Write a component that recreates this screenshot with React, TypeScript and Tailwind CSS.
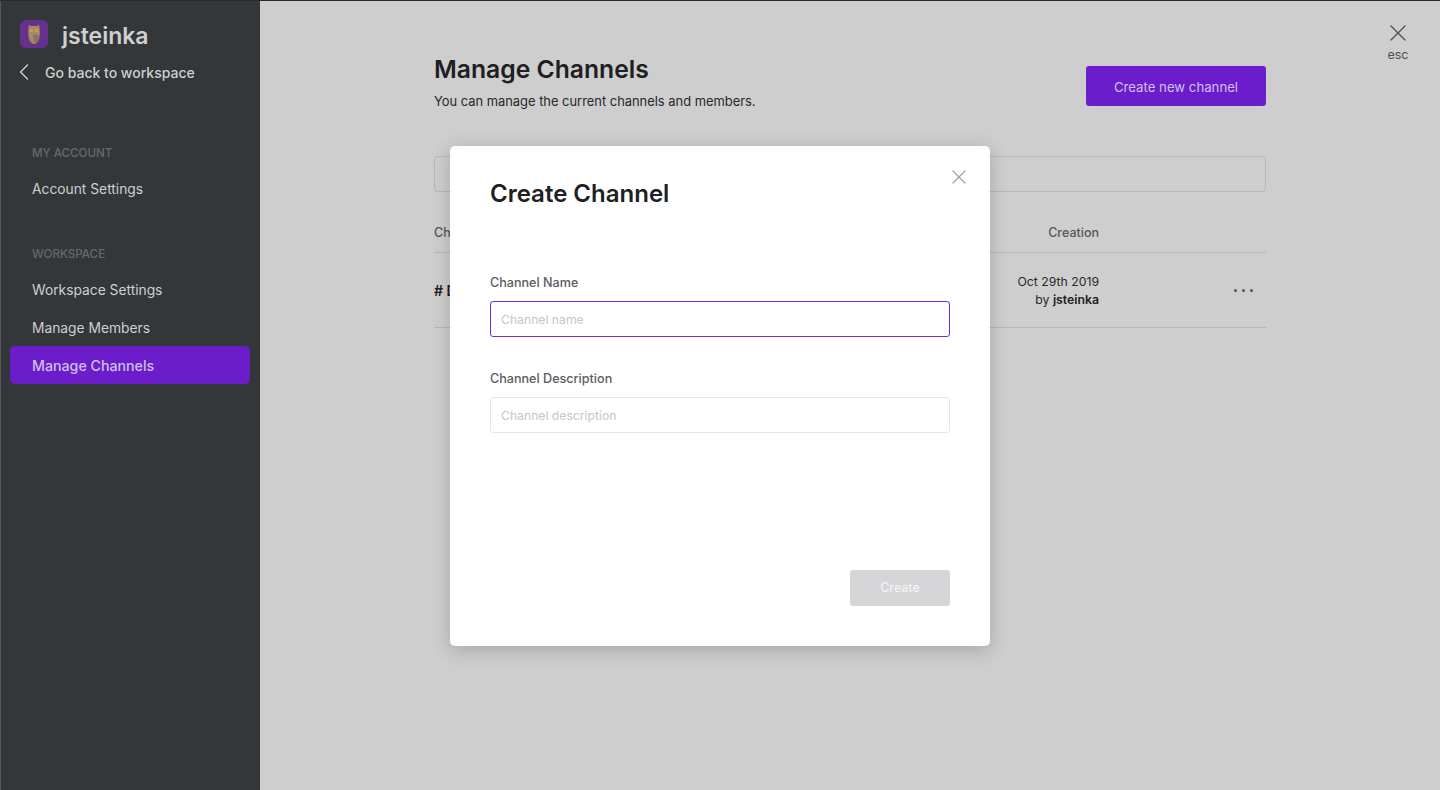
import { X, ChevronLeft } from 'lucide-react';

const sections = [
  { title: 'MY ACCOUNT', items: ['Account Settings'] },
  { title: 'WORKSPACE', items: ['Workspace Settings', 'Manage Members', 'Manage Channels'] },
];

function OwlLogo() {
  return (
    <svg width="28" height="28" viewBox="0 0 28 28" className="shrink-0">
      <rect width="28" height="28" rx="6" fill="#66318c" />
      <path d="M9 4.500l1.500 1.500h7l1.500-1.500.8 6.500c.4 5-1 9.500-3.300 12h-5C9.300 21 7.800 16 8.200 11z" fill="#a58b6c" />
      <path d="M8.200 11c0 5 1.500 9.500 3.800 12h-1.500C8.700 21 7.700 16 8.200 11z" fill="#7a6650" />
      <path d="M13 14.500h5.500c0 3.500-1 6.500-2.500 8h-1.500C13.500 20 13 17 13 14.500z" fill="#8a7359" />
      <circle cx="11.500" cy="10.500" r="1.500" fill="#d9a02c" />
      <circle cx="16.500" cy="10.500" r="1.500" fill="#d9a02c" />
      <rect x="12" y="23" width="4" height="1" fill="#c9642a" />
    </svg>
  );
}

function Sidebar() {
  return (
    <aside className="w-[260px] shrink-0 bg-[#33373a] border-l border-l-[#55585b] flex flex-col">
      <div className="mt-[19px] pl-[19px] flex items-center gap-[14px] h-[28px]">
        <OwlLogo />
        <span className="pt-[3px] text-[23px] font-semibold leading-[28px] text-[#cfcfcf]">jsteinka</span>
      </div>
      <div className="mt-[12px] pl-[9px] flex items-center h-[24px] text-[14px] font-medium text-[#cfcfcf]">
        <ChevronLeft size={28} strokeWidth={1.200} className="text-[#cfcfcf]" />
        <span className="ml-[7px]">Go back to workspace</span>
      </div>
      <nav className="mt-[61px] pl-[9px] pr-[10px] flex flex-col gap-[39px]">
        {sections.map(s => (
          <div key={s.title}>
            <div className="pl-[22px] text-[11.600px] leading-[16px] font-medium text-[#66696c]">{s.title}</div>
            <div className="mt-[8px] flex flex-col">
              {s.items.map(item => (
                <div
                  key={item}
                  className={
                    item === 'Manage Channels'
                      ? 'h-[38px] pl-[22px] pt-[2px] flex items-center rounded-[5px] bg-[#6b1dcc] text-[14.200px] font-medium text-[#cfc0e8]'
                      : 'h-[38px] pl-[22px] pt-[2px] flex items-center text-[13.800px] text-[#cfcfcf]'
                  }
                >
                  {item}
                </div>
              ))}
            </div>
          </div>
        ))}
      </nav>
    </aside>
  );
}

function ChannelsPage() {
  return (
    <main className="relative flex-1 bg-[#cecece]">
      <div className="absolute right-[28px] top-[18px] w-[28px] flex flex-col items-center text-[#4f5154]">
        <X size={28} strokeWidth={1.200} className="shrink-0" />
        <span className="text-[12.500px] leading-[16px]">esc</span>
      </div>
      <div className="w-[832px] mx-auto pt-[53px]">
        <div className="flex justify-between items-start">
          <div>
            <h1 className="text-[24.700px] font-semibold leading-[30px] text-[#1e2022]">Manage Channels</h1>
            <p className="mt-[8px] text-[12.900px] leading-[19px] text-[#27292b]">You can manage the current channels and members.</p>
          </div>
          <button className="mt-[12px] w-[180px] h-[40px] pt-[3px] rounded-[3px] bg-[#6b1dcc] text-[13.200px] text-[#d2c1ec]">Create new channel</button>
        </div>
        <div className="mt-[45px] h-[36px] rounded-[4px] border border-[#b8b8b8]" />
        <div className="mt-[22px] h-[39px] border-b border-[#b8b8b8] flex items-center justify-between text-[12.500px] font-medium text-[#55575a]">
          <span>Channel</span>
          <span className="mr-[167px]">Creation</span>
        </div>
        <div className="h-[75px] border-b border-[#b8b8b8] flex items-center justify-between">
          <span className="text-[14px] font-semibold text-[#1e2022]"># Design</span>
          <div className="flex items-center">
            <div className="pt-[2px] text-right text-[12.250px] leading-[18px] text-[#27292b]">
              <div>Oct 29th 2019</div>
              <div>by <span className="font-semibold text-[#1e2022]">jsteinka</span></div>
            </div>
            <div className="ml-[135px] mr-[13px] flex gap-[5px]">
              <span className="w-[3px] h-[3px] rounded-full bg-[#4f5154]" />
              <span className="w-[3px] h-[3px] rounded-full bg-[#4f5154]" />
              <span className="w-[3px] h-[3px] rounded-full bg-[#4f5154]" />
            </div>
          </div>
        </div>
      </div>
    </main>
  );
}

function CreateChannelModal() {
  return (
    <div className="absolute left-[450px] top-[145px] w-[540px] h-[500px] bg-white rounded-[5px] shadow-[0_4px_20px_rgba(0,0,0,0.2)] px-[40px] pt-[33px] flex flex-col">
      <X size={24} strokeWidth={1.200} className="absolute right-[19px] top-[19px] text-[#a3a3a3]" />
      <h2 className="text-[24px] font-semibold leading-[30px] text-[#1e2022]">Create Channel</h2>
      <label className="mt-[66px] text-[12.600px] font-medium leading-[16px] text-[#5a5c60]">Channel Name</label>
      <input
        readOnly
        placeholder="Channel name"
        className="mt-[10px] h-[36px] rounded-[3px] border border-[#7a2be0] px-[10px] text-[12.200px] outline-none placeholder:text-[#c6c6c6]"
      />
      <label className="mt-[34px] text-[12.600px] font-medium leading-[16px] text-[#5a5c60]">Channel Description</label>
      <input
        readOnly
        placeholder="Channel description"
        className="mt-[10px] h-[36px] rounded-[3px] border border-[#e6e6e6] px-[10px] text-[12.200px] outline-none placeholder:text-[#c6c6c6]"
      />
      <div className="mt-[137px] flex justify-end">
        <button className="w-[100px] h-[36px] rounded-[3px] bg-[#d5d5d8] text-[12.400px] font-medium text-[#f4f4f5]">Create</button>
      </div>
    </div>
  );
}

export default function App() {
  return (
    <div className="relative flex h-[790px] w-[1440px] overflow-hidden border-t border-t-[#2a2a2c] font-['Inter',sans-serif]">
      <Sidebar />
      <ChannelsPage />
      <CreateChannelModal />
    </div>
  );
}
